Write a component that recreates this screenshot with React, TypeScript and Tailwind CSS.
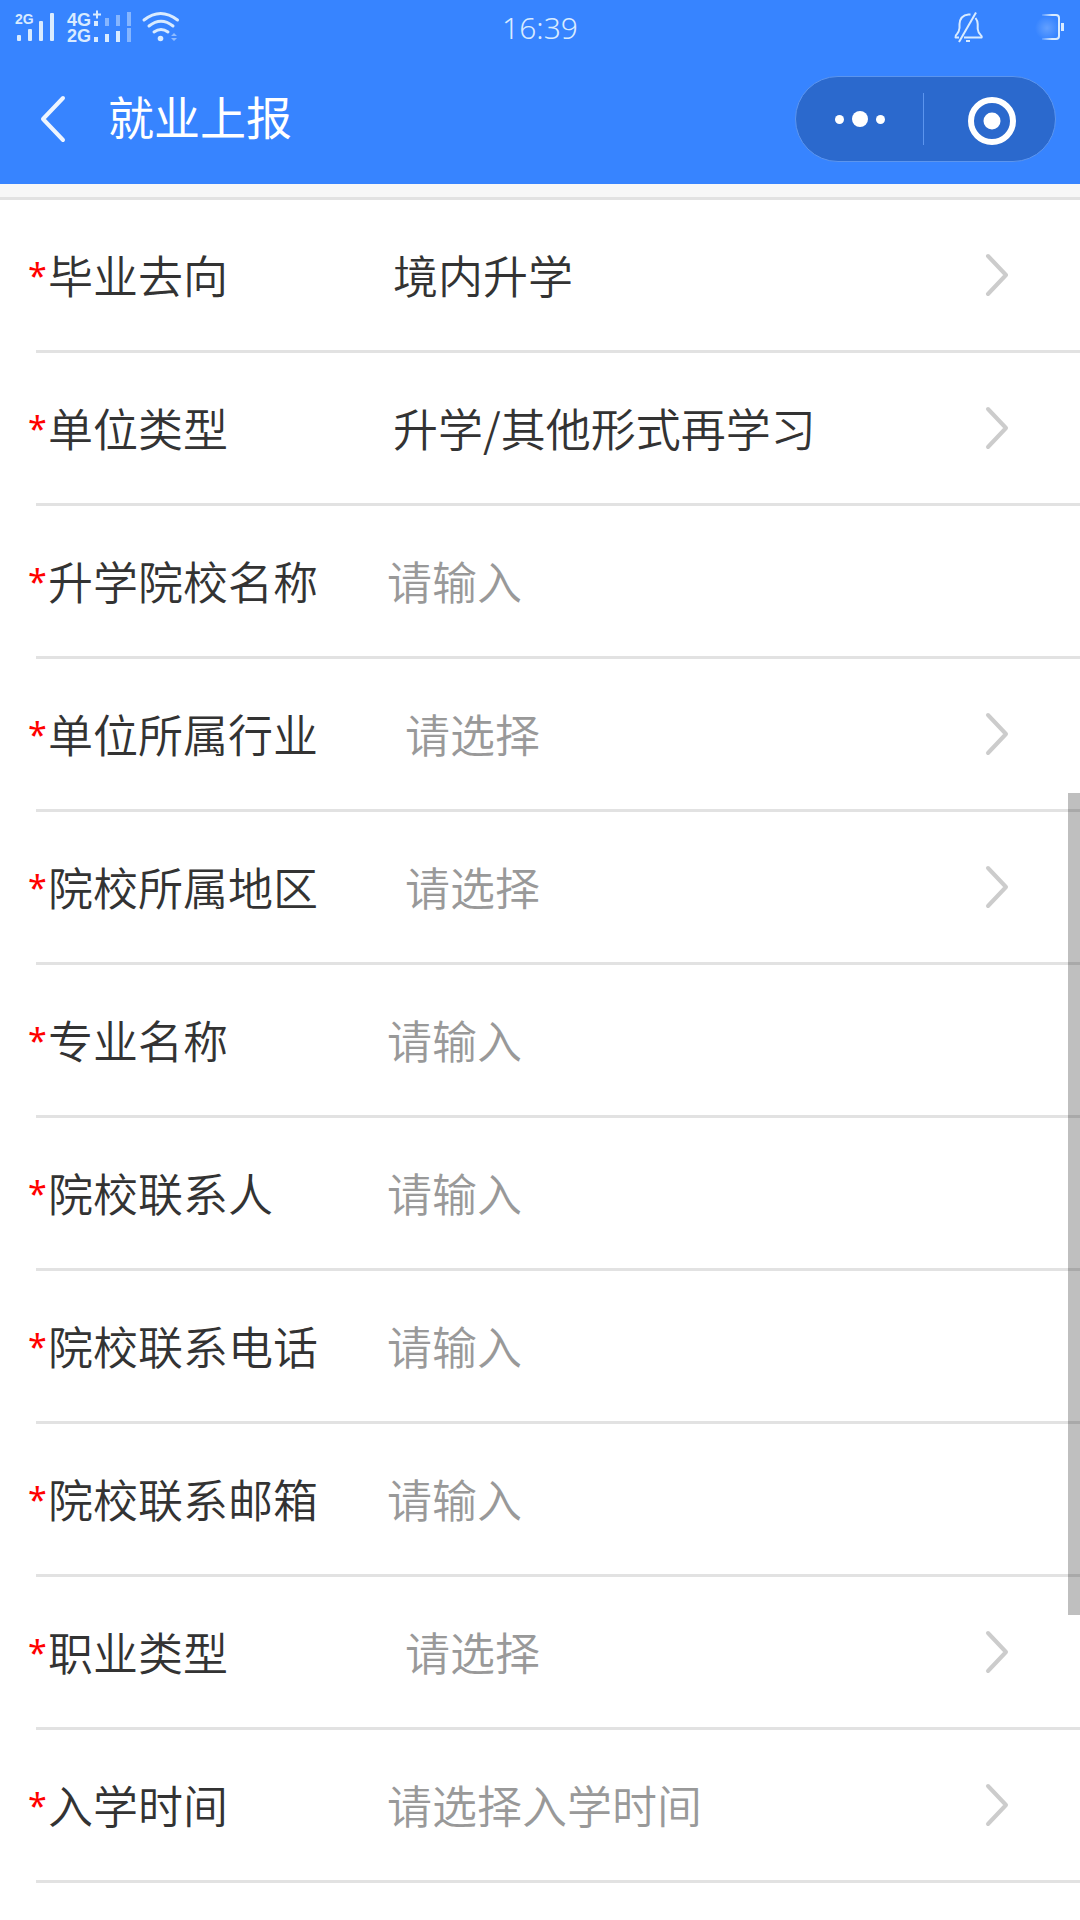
import { useState } from "react";
import { clsx } from "clsx";

type FieldType = "select" | "input" | "date";

interface Field {
  id: string;
  label: string;
  type: FieldType;
  value?: string;
  placeholder?: string;
}

const FIELDS: Field[] = [
  { id: "destination", label: "毕业去向", type: "select", value: "境内升学" },
  { id: "unitType", label: "单位类型", type: "select", value: "升学/其他形式再学习" },
  { id: "school", label: "升学院校名称", type: "input", placeholder: "请输入" },
  { id: "industry", label: "单位所属行业", type: "select", placeholder: "请选择" },
  { id: "region", label: "院校所属地区", type: "select", placeholder: "请选择" },
  { id: "major", label: "专业名称", type: "input", placeholder: "请输入" },
  { id: "contact", label: "院校联系人", type: "input", placeholder: "请输入" },
  { id: "phone", label: "院校联系电话", type: "input", placeholder: "请输入" },
  { id: "email", label: "院校联系邮箱", type: "input", placeholder: "请输入" },
  { id: "jobType", label: "职业类型", type: "select", placeholder: "请选择" },
  { id: "enrollDate", label: "入学时间", type: "date", placeholder: "请选择入学时间" },
];

function SignalIcons() {
  return (
    <svg width="184" height="54" viewBox="0 0 184 54" fill="#d9ebff" className="font-['Liberation_Sans',sans-serif] font-bold">
      <text x="15" y="24" fontSize="14">2G</text>
      <rect x="17" y="35" width="4" height="6" rx="1" />
      <rect x="28" y="29" width="4" height="12" rx="1" />
      <rect x="39" y="21" width="4" height="20" rx="1" />
      <rect x="50" y="13" width="4" height="28" rx="1" />

      <text fontSize="18">
        <tspan x="67" y="26">4G</tspan>
        <tspan x="67" y="42">2G</tspan>
      </text>
      <path d="M93 14.500h8M97 10.500v8" stroke="#d9ebff" strokeWidth="2" />
      <rect x="94" y="21" width="4" height="5" />
      <rect x="94" y="37" width="4" height="5" />
      <rect x="105" y="34" width="4" height="8" />
      <rect x="116" y="31" width="4" height="11" />
      <g fill="#86b6ff">
        <rect x="105" y="18" width="4" height="8" />
        <rect x="116" y="15" width="4" height="11" />
        <rect x="127" y="12" width="4" height="14" />
        <rect x="127" y="28" width="4" height="14" />
      </g>

      {/* wifi */}
      <g fill="none" stroke="#d9ebff" strokeWidth="3" strokeLinecap="round">
        <path d="M144 20q16.500-13 33.500 0" />
        <path d="M149 26q12-9.500 24 0" />
        <path d="M154 32q7-5 14 0" />
      </g>
      <circle cx="160.500" cy="38.500" r="2.800" />
      <path d="M171 36l3-3 3 3zM171 38l3 3 3-3z" fill="#8fbcff" />
    </svg>
  );
}

function StatusRight() {
  return (
    <svg width="130" height="54" viewBox="0 0 130 54" fill="none" stroke="#d9ebff" strokeWidth="2">
      <defs>
        <linearGradient id="fade" x1="90" x2="102" y1="0" y2="0" gradientUnits="userSpaceOnUse">
          <stop offset="0" stopColor="#d9ebff" stopOpacity="0" />
          <stop offset="1" stopColor="#d9ebff" />
        </linearGradient>
        <radialGradient id="glow">
          <stop offset="0" stopColor="#8fbcff" stopOpacity="0.5" />
          <stop offset="1" stopColor="#8fbcff" stopOpacity="0" />
        </radialGradient>
      </defs>
      <path d="M9 37.500H5.500q-.500-2 1.500-3.500 2-2 2.500-6v-4q.500-8.500 9-9.500h2M25.500 18q2 2.500 2.200 6v5q.500 4 3 6 1.500 1 1 2.500H14" strokeLinejoin="round" />
      <path d="M26 12.500L9 42" />
      <path d="M16 41h4" />
      <circle cx="97" cy="28" r="12" fill="url(#glow)" stroke="none" />
      <path d="M92 15h14q3 0 3 3v18q0 3-3 3H92" stroke="url(#fade)" />
      <rect x="111" y="23" width="3" height="8" fill="#d9ebff" stroke="none" />
    </svg>
  );
}

function Header() {
  return (
    <header className="bg-[#3784ff]">
      <div className="grid h-[54px] grid-cols-[1fr_auto_1fr] items-center">
        <SignalIcons />
        <time className="font-['Noto_Sans',sans-serif] text-[30px] font-light text-[#d9ebff]">16:39</time>
        <div className="flex justify-end">
          <StatusRight />
        </div>
      </div>
      <div className="flex h-[130px] items-center pl-9 pr-6">
        <button type="button" aria-label="返回" className="mr-8">
          <svg width="40" height="52" viewBox="0 0 40 52" fill="none" stroke="#eef5ff" strokeWidth="4" strokeLinecap="round" strokeLinejoin="round">
            <path d="M27 5L7 26l20 21" />
          </svg>
        </button>
        <h1 className="flex-1 pb-2 text-[46px] leading-none font-normal text-white">就业上报</h1>
        <div className="flex h-[86px] w-[261px] items-center rounded-full border border-[#5c95ee] bg-[#2b69cd]">
          <button type="button" aria-label="更多" className="flex flex-1 items-center justify-center gap-2">
            <span className="size-[9px] rounded-full bg-white" />
            <span className="size-4 rounded-full bg-white" />
            <span className="size-[9px] rounded-full bg-white" />
          </button>
          <span className="h-[52px] w-px bg-[#5c95ee]" />
          <button type="button" aria-label="关闭" className="flex flex-1 items-center justify-center pl-1 pt-1">
            <svg width="48" height="48" viewBox="0 0 48 48">
              <circle cx="24" cy="24" r="21" fill="none" stroke="#fff" strokeWidth="6" />
              <circle cx="24" cy="24" r="8.500" fill="#fff" />
            </svg>
          </button>
        </div>
      </div>
    </header>
  );
}

function FieldRow({ field }: { field: Field }) {
  const [value, setValue] = useState(field.value ?? "");
  const { id, label, type, placeholder } = field;

  return (
    <div>
      <div className="flex h-[150px] items-center pl-7 pr-[68px]">
        <label htmlFor={id} className="flex w-[359px] shrink-0 items-center text-[#333]">
          <span className="w-5 font-['Noto_Sans',sans-serif] text-[34px] font-normal text-[#f00]">*</span>
          {label}
        </label>
        {type === "select" ? (
          <select
            id={id}
            value={value}
            onChange={(e) => setValue(e.target.value)}
            className={clsx("min-w-0 flex-1 appearance-none bg-transparent outline-none", value ? "pl-1.5 text-[#333]" : "pl-[18px] text-[#999]")}
          >
            {placeholder && <option value="">{placeholder}</option>}
            {field.value && <option value={field.value}>{field.value}</option>}
          </select>
        ) : (
          <input
            id={id}
            type="text"
            value={value}
            placeholder={placeholder}
            onChange={(e) => setValue(e.target.value)}
            className="min-w-0 flex-1 bg-transparent text-[#333] outline-none placeholder:text-[#999]"
          />
        )}
        {type !== "input" && (
          <svg width="28" height="44" viewBox="0 0 28 44" fill="none" stroke="#ccc" strokeWidth="4" strokeLinecap="round" strokeLinejoin="round">
            <path d="M4 3l18 19L4 41" />
          </svg>
        )}
      </div>
      <hr className="ml-9 border-t-[3px] border-[#e2e2e2]" />
    </div>
  );
}

export default function App() {
  return (
    <div className="relative min-h-screen bg-white font-['Noto_Sans_CJK_SC',sans-serif]">
      <Header />
      <div className="h-4 border-b-[3px] border-[#e2e2e2] bg-[#f7f7f7]" />
      <form className="text-[45px] leading-[60px] font-[350]">
        {FIELDS.map((field) => (
          <FieldRow key={field.id} field={field} />
        ))}
      </form>
      {/* scroll thumb */}
      <div className="absolute right-0 top-[793px] h-[822px] w-3 bg-black/25" />
    </div>
  );
}
